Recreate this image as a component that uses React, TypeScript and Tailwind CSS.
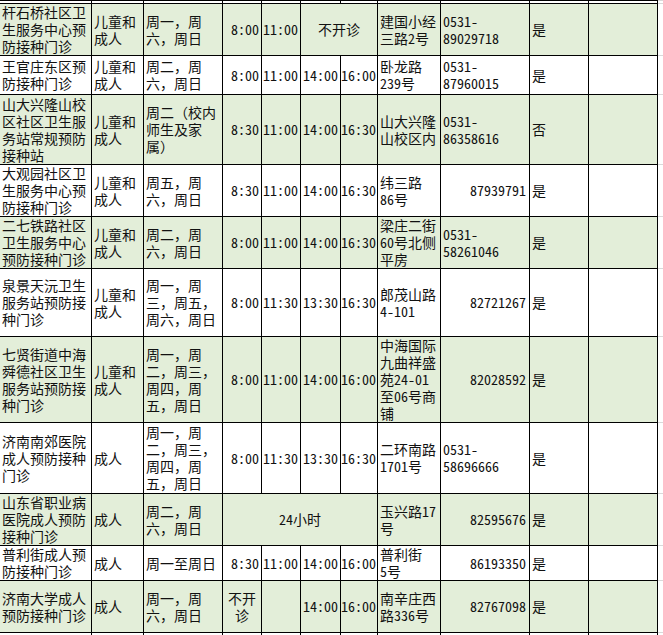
type TimeCell = { lines: string[]; span?: number; center?: boolean };

type Row = {
  h: string;
  green: boolean;
  name: string[];
  who: string[];
  days: string[];
  times: TimeCell[];
  addr: string[];
  phone: string[];
  right?: boolean;
  ok: string;
};

const t = (s: string): TimeCell => ({ lines: [s] });
const four = (a: string, b: string, c: string, d: string) => [t(a), t(b), t(c), t(d)];

const rows: Row[] = [
  {
    h: "h-[52px]",
    green: true,
    name: ["杆石桥社区卫", "生服务中心预", "防接种门诊"],
    who: ["儿童和", "成人"],
    days: ["周一，周", "六，周日"],
    times: [t("8:00"), t("11:00"), { lines: ["不开诊"], span: 2, center: true }],
    addr: ["建国小经", "三路2号"],
    phone: ["0531-", "89029718"],
    ok: "是",
  },
  {
    h: "h-[39px]",
    green: false,
    name: ["王官庄东区预", "防接种门诊"],
    who: ["儿童和", "成人"],
    days: ["周二，周", "六，周日"],
    times: four("8:00", "11:00", "14:00", "16:00"),
    addr: ["卧龙路", "239号"],
    phone: ["0531-", "87960015"],
    ok: "是",
  },
  {
    h: "h-[70px]",
    green: true,
    name: ["山大兴隆山校", "区社区卫生服", "务站常规预防", "接种站"],
    who: ["儿童和", "成人"],
    days: ["周二（校内", "师生及家", "属）"],
    times: four("8:30", "11:00", "14:00", "16:30"),
    addr: ["山大兴隆", "山校区内"],
    phone: ["0531-", "86358616"],
    ok: "否",
  },
  {
    h: "h-[52px]",
    green: false,
    name: ["大观园社区卫", "生服务中心预", "防接种门诊"],
    who: ["儿童和", "成人"],
    days: ["周五，周", "六，周日"],
    times: four("8:30", "11:00", "14:00", "16:30"),
    addr: ["纬三路", "86号"],
    phone: ["87939791"],
    right: true,
    ok: "是",
  },
  {
    h: "h-[52px]",
    green: true,
    name: ["二七铁路社区", "卫生服务中心", "预防接种门诊"],
    who: ["儿童和", "成人"],
    days: ["周二，周", "六，周日"],
    times: four("8:00", "11:00", "14:00", "16:30"),
    addr: ["梁庄二街", "60号北侧", "平房"],
    phone: ["0531-", "58261046"],
    ok: "是",
  },
  {
    h: "h-[68px]",
    green: false,
    name: ["泉景天沅卫生", "服务站预防接", "种门诊"],
    who: ["儿童和", "成人"],
    days: ["周一，周", "三，周五，", "周六，周日"],
    times: four("8:00", "11:30", "13:30", "16:30"),
    addr: ["郎茂山路", "4-101"],
    phone: ["82721267"],
    right: true,
    ok: "是",
  },
  {
    h: "h-[86px]",
    green: true,
    name: ["七贤街道中海", "舜德社区卫生", "服务站预防接", "种门诊"],
    who: ["儿童和", "成人"],
    days: ["周一，周", "二，周三，", "周四，周", "五，周日"],
    times: four("8:00", "11:00", "14:00", "16:00"),
    addr: ["中海国际", "九曲祥盛", "苑24-01", "至06号商", "铺"],
    phone: ["82028592"],
    right: true,
    ok: "是",
  },
  {
    h: "h-[71px]",
    green: false,
    name: ["济南南郊医院", "成人预防接种", "门诊"],
    who: ["成人"],
    days: ["周一，周", "二，周三，", "周四，周", "五，周日"],
    times: four("8:00", "11:30", "13:30", "16:30"),
    addr: ["二环南路", "1701号"],
    phone: ["0531-", "58696666"],
    ok: "是",
  },
  {
    h: "h-[52px]",
    green: true,
    name: ["山东省职业病", "医院成人预防", "接种门诊"],
    who: ["成人"],
    days: ["周二，周", "六，周日"],
    times: [{ lines: ["24小时"], span: 4, center: true }],
    addr: ["玉兴路17", "号"],
    phone: ["82595676"],
    right: true,
    ok: "是",
  },
  {
    h: "h-[35px]",
    green: false,
    name: ["普利街成人预", "防接种门诊"],
    who: ["成人"],
    days: ["周一至周日"],
    times: four("8:30", "11:00", "14:00", "16:00"),
    addr: ["普利街", "5号"],
    phone: ["86193350"],
    right: true,
    ok: "是",
  },
  {
    h: "h-[52px]",
    green: true,
    name: ["济南大学成人", "预防接种门诊"],
    who: ["成人"],
    days: ["周一，周", "六，周日"],
    times: [{ lines: ["不开", "诊"], center: true }, t(""), t("14:00"), t("16:00")],
    addr: ["南辛庄西", "路336号"],
    phone: ["82767098"],
    right: true,
    ok: "是",
  },
];

const cell = "border border-black px-[2px] py-0 align-middle whitespace-nowrap";
const spare = "border border-[#d9d9d9] bg-white p-0";

function Lines({ lines }: { lines: string[] }) {
  return (
    <>
      {lines.map((l, i) => (
        <div key={i}>{l}</div>
      ))}
    </>
  );
}

function EmptyRow({ h }: { h: string }) {
  return (
    <tr className={h}>
      {Array.from({ length: 11 }).map((_, i) => (
        <td key={i} className="border border-black p-0"></td>
      ))}
      <td className={spare}></td>
    </tr>
  );
}

export default function App() {
  return (
    <div className="w-[663px] h-[635px] overflow-hidden bg-white">
      <table className="-ml-px w-[688px] table-fixed border-collapse text-[14px] leading-[17px] text-[#111] font-['Noto_Sans_Mono_CJK_SC','Noto_Sans_CJK_SC',sans-serif]">
        <colgroup>
          <col className="w-[92px]" />
          <col className="w-[52px]" />
          <col className="w-[79px]" />
          <col className="w-[39px]" />
          <col className="w-[39px]" />
          <col className="w-[40px]" />
          <col className="w-[37px]" />
          <col className="w-[63px]" />
          <col className="w-[89px]" />
          <col className="w-[59px]" />
          <col className="w-[69px]" />
          <col className="w-[30px]" />
        </colgroup>
        <tbody>
          <EmptyRow h="h-[3px]" />
          {rows.map((r, i) => (
            <tr key={i} className={`${r.h} ${r.green ? "bg-[#e3eed9]" : "bg-white"}`}>
              <td className={cell}>
                <Lines lines={r.name} />
              </td>
              <td className={cell}>
                <Lines lines={r.who} />
              </td>
              <td className={cell}>
                <Lines lines={r.days} />
              </td>
              {r.times.map((tc, j) => (
                <td
                  key={j}
                  colSpan={tc.span}
                  className={`border border-black py-0 align-middle whitespace-nowrap ${
                    tc.center ? "px-0 text-center" : "pl-0 pr-[2px] text-right"
                  }`}
                >
                  <Lines lines={tc.lines} />
                </td>
              ))}
              <td className={cell}>
                <Lines lines={r.addr} />
              </td>
              <td className={`${cell} ${r.right ? "text-right pr-[3px]" : ""}`}>
                <Lines lines={r.phone} />
              </td>
              <td className={cell}>{r.ok}</td>
              <td className={cell}></td>
              <td className={spare}></td>
            </tr>
          ))}
          <EmptyRow h="h-[20px]" />
        </tbody>
      </table>
    </div>
  );
}
